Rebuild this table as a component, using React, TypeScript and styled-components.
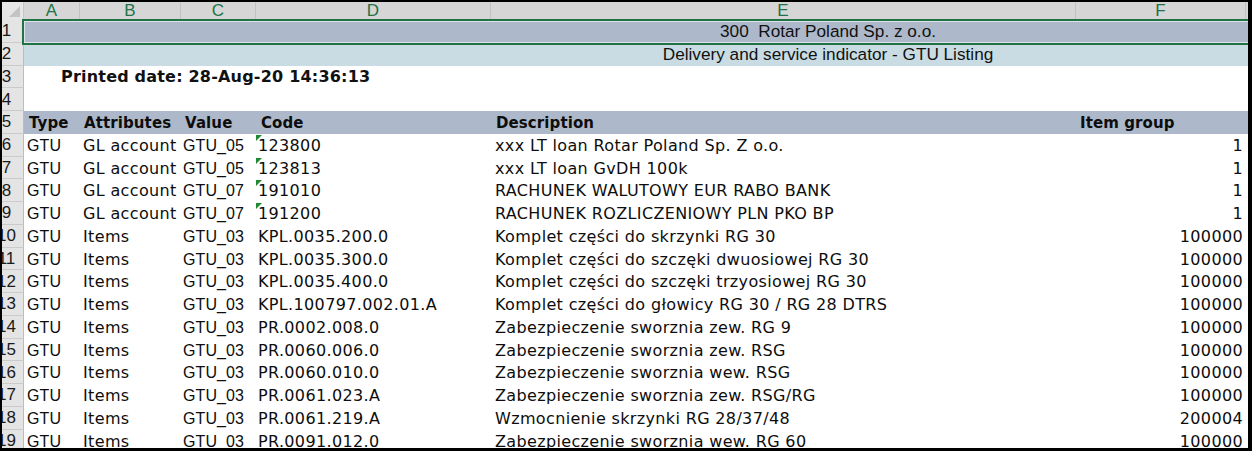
import React from 'react';
import styled, { createGlobalStyle, css } from 'styled-components';

const Global = createGlobalStyle`
  html, body { margin: 0; padding: 0; background: #fff; }
  #root { width: 1252px; height: 451px; }
`;

const ARIAL = '"Liberation Sans", Arial, sans-serif';
const VERDANA = '"DejaVu Sans", Verdana, sans-serif';
const BODY_COLS = '56px 101px 75px 235px 585px 170px 6px';
const ROW_H = '22.75px';

const Sheet = styled.div`
  position: relative;
  width: 1252px;
  height: 451px;
  overflow: hidden;
  background: #fff;
  display: flex;
  flex-direction: column;
  &::after {
    content: '';
    position: absolute;
    inset: 0;
    border-style: solid;
    border-color: #000;
    border-width: 2px 4px 3px 2px;
    pointer-events: none;
    z-index: 10;
  }
`;

const ColumnBar = styled.div`
  display: flex;
  height: 20px;
  flex: none;
`;

const Corner = styled.div`
  position: relative;
  width: 24px;
  flex: none;
  background: #e6e6e6;
  border-right: 1px solid #c6c6c6;
  box-sizing: border-box;
  &::after {
    content: '';
    position: absolute;
    right: 3px;
    bottom: 3px;
    width: 0;
    height: 0;
    border-left: 11px solid transparent;
    border-bottom: 11px solid #c4c4c4;
  }
`;

const Letters = styled.div`
  flex: 1;
  display: grid;
  grid-template-columns: ${BODY_COLS};
  background: #d6d6d6;
`;

const Letter = styled.div`
  font-family: ${ARIAL};
  font-size: 17px;
  color: #217346;
  text-align: center;
  line-height: 20px;
  padding-top: 1px;
  border-right: 1px solid #c2c2c2;
  box-sizing: border-box;
`;

const Row = styled.div`
  display: flex;
  height: ${ROW_H};
  flex: none;
`;

const RowNum = styled.div`
  width: 24px;
  flex: none;
  box-sizing: border-box;
  display: flex;
  align-items: center;
  justify-content: center;
  padding-right: 10px;
  padding-top: 1px;
  background: #e4e4e4;
  border-bottom: 1px solid #cbcbcb;
  border-right: 1px solid #bdbdbd;
  font-family: ${ARIAL};
  font-size: 17px;
  color: #1a1a1a;
  white-space: nowrap;
`;

type Tone = 'none' | 'dark' | 'light';
const toneBg: Record<Tone, string> = {
  none: '#ffffff',
  dark: '#adb9ca',
  light: '#c9dce3',
};

const Body = styled.div<{ $tone: Tone; $selected?: boolean }>`
  position: relative;
  flex: 1;
  display: grid;
  grid-template-columns: ${BODY_COLS};
  background: ${(p) => toneBg[p.$tone]};
  ${(p) =>
    p.$selected &&
    css`
      &::after {
        content: '';
        position: absolute;
        top: -1px;
        left: -2px;
        right: -10px;
        bottom: -2px;
        border: 2px solid #217346;
        box-shadow: inset 0 0 0 1px rgba(255, 255, 255, 0.6);
        pointer-events: none;
        z-index: 5;
      }
    `}
`;

const Title = styled.div`
  grid-column: 1 / -1;
  font-family: ${ARIAL};
  font-size: 17.2px;
  color: #111;
  text-align: center;
  padding-left: 380px;
  line-height: ${ROW_H};
  white-space: pre;
`;

const Printed = styled.div`
  grid-column: 1 / -1;
  font-family: ${VERDANA};
  font-weight: bold;
  font-size: 16px;
  letter-spacing: 0.2px;
  color: #111;
  padding-left: 37px;
  line-height: ${ROW_H};
  white-space: pre;
`;

type Font = 'arial' | 'verdana';

const Cell = styled.div<{ $font: Font; $pad: number; $right?: boolean; $bold?: boolean; $flag?: boolean }>`
  position: relative;
  font-family: ${(p) => (p.$font === 'arial' ? ARIAL : VERDANA)};
  font-size: ${(p) => (p.$bold ? '15px' : '16px')};
  font-weight: ${(p) => (p.$bold ? 'bold' : 'normal')};
  letter-spacing: ${(p) => (p.$font === 'verdana' && !p.$bold ? '0.35px' : '0.1px')};
  color: #0d0d0d;
  line-height: ${ROW_H};
  padding-top: 1px;
  white-space: nowrap;
  text-align: ${(p) => (p.$right ? 'right' : 'left')};
  ${(p) => (p.$right ? `padding-right: ${p.$pad}px;` : `padding-left: ${p.$pad}px;`)}
  ${(p) =>
    p.$flag &&
    css`
      &::before {
        content: '';
        position: absolute;
        top: 1px;
        left: 0;
        width: 0;
        height: 0;
        border-top: 6px solid #1f8a2f;
        border-right: 6px solid transparent;
      }
    `}
`;

const columns: { font: Font; pad: number; headPad: number; right?: boolean }[] = [
  { font: 'arial', pad: 3, headPad: 5 },
  { font: 'verdana', pad: 3, headPad: 4 },
  { font: 'arial', pad: 2, headPad: 4 },
  { font: 'verdana', pad: 2, headPad: 5 },
  { font: 'verdana', pad: 4, headPad: 5 },
  { font: 'verdana', pad: 3, headPad: 4, right: true },
];

const headers = ['Type', 'Attributes', 'Value', 'Code', 'Description', 'Item group'];

const data: string[][] = [
  ['GTU', 'GL account', 'GTU_05', '123800', 'xxx LT loan Rotar Poland Sp. Z o.o.', '1'],
  ['GTU', 'GL account', 'GTU_05', '123813', 'xxx LT loan GvDH 100k', '1'],
  ['GTU', 'GL account', 'GTU_07', '191010', 'RACHUNEK WALUTOWY EUR RABO BANK', '1'],
  ['GTU', 'GL account', 'GTU_07', '191200', 'RACHUNEK ROZLICZENIOWY PLN PKO BP', '1'],
  ['GTU', 'Items', 'GTU_03', 'KPL.0035.200.0', 'Komplet części do skrzynki RG 30', '100000'],
  ['GTU', 'Items', 'GTU_03', 'KPL.0035.300.0', 'Komplet części do szczęki dwuosiowej RG 30', '100000'],
  ['GTU', 'Items', 'GTU_03', 'KPL.0035.400.0', 'Komplet części do szczęki trzyosiowej RG 30', '100000'],
  ['GTU', 'Items', 'GTU_03', 'KPL.100797.002.01.A', 'Komplet części do głowicy RG 30 / RG 28 DTRS', '100000'],
  ['GTU', 'Items', 'GTU_03', 'PR.0002.008.0', 'Zabezpieczenie sworznia zew. RG 9', '100000'],
  ['GTU', 'Items', 'GTU_03', 'PR.0060.006.0', 'Zabezpieczenie sworznia zew. RSG', '100000'],
  ['GTU', 'Items', 'GTU_03', 'PR.0060.010.0', 'Zabezpieczenie sworznia wew. RSG', '100000'],
  ['GTU', 'Items', 'GTU_03', 'PR.0061.023.A', 'Zabezpieczenie sworznia zew. RSG/RG', '100000'],
  ['GTU', 'Items', 'GTU_03', 'PR.0061.219.A', 'Wzmocnienie skrzynki RG 28/37/48', '200004'],
  ['GTU', 'Items', 'GTU_03', 'PR.0091.012.0', 'Zabezpieczenie sworznia wew. RG 60', '100000'],
];

export default function App() {
  return (
    <>
      <Global />
      <Sheet>
        <ColumnBar>
          <Corner />
          <Letters>
            {['A', 'B', 'C', 'D', 'E', 'F', ''].map((l, i) => (
              <Letter key={i}>{l}</Letter>
            ))}
          </Letters>
        </ColumnBar>

        <Row>
          <RowNum>1</RowNum>
          <Body $tone="dark" $selected>
            <Title>{'300  Rotar Poland Sp. z o.o.'}</Title>
          </Body>
        </Row>
        <Row>
          <RowNum>2</RowNum>
          <Body $tone="light">
            <Title>Delivery and service indicator - GTU Listing</Title>
          </Body>
        </Row>
        <Row>
          <RowNum>3</RowNum>
          <Body $tone="none">
            <Printed>Printed date: 28-Aug-20 14:36:13</Printed>
          </Body>
        </Row>
        <Row>
          <RowNum>4</RowNum>
          <Body $tone="none" />
        </Row>
        <Row>
          <RowNum>5</RowNum>
          <Body $tone="dark">
            {headers.map((h, i) => (
              <Cell key={h} $font="verdana" $bold $pad={columns[i].headPad}>
                {h}
              </Cell>
            ))}
          </Body>
        </Row>

        {data.map((r, ri) => (
          <Row key={ri}>
            <RowNum>{ri + 6}</RowNum>
            <Body $tone="none">
              {r.map((v, ci) => (
                <Cell
                  key={ci}
                  $font={columns[ci].font}
                  $pad={columns[ci].pad}
                  $right={columns[ci].right}
                  $flag={ci === 3 && ri < 4}
                >
                  {v}
                </Cell>
              ))}
            </Body>
          </Row>
        ))}
      </Sheet>
    </>
  );
}
